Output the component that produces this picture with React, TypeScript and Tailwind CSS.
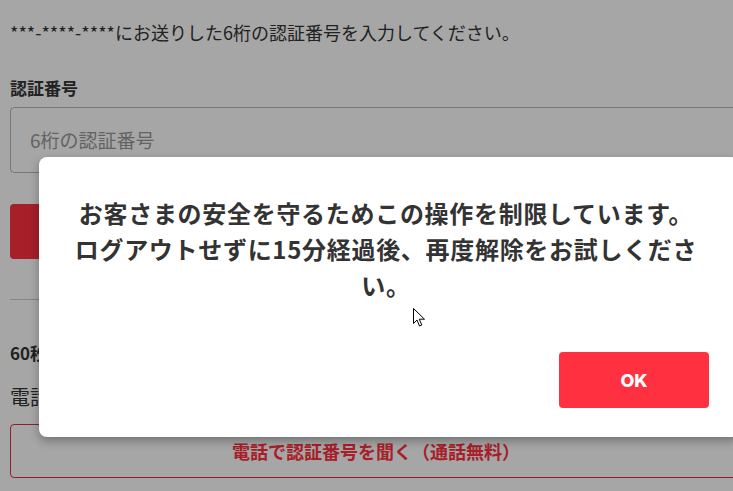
import React from 'react';

const jp = "font-['Noto_Sans_CJK_JP',sans-serif]";

export default function App() {
  return (
    <div className={`relative w-[733px] h-[491px] overflow-hidden bg-white text-[#333] ${jp}`}>
      {/* Page underneath */}
      <div className="w-[732px] ml-[10px]">
        <p className="pt-[20px] text-[18px] leading-[24px]">
          ***-****-****にお送りした6桁の認証番号を入力してください。
        </p>

        <div className="mt-[32px] text-[17px] font-bold leading-[24px]">認証番号</div>
        <div className="mt-[7px] h-[66px] rounded border border-[#bbb] flex items-center px-[19px] text-[19px] text-[#999]">
          6桁の認証番号
        </div>

        <button className="mt-[31px] w-full h-[55px] rounded bg-[#ff3040] text-white font-bold text-[18px]">
          認証する
        </button>

        <div className="mt-[40px] h-px bg-[#ccc]" />

        <div className="mt-[41px] text-[17px] font-bold leading-[24px]">60秒経っても認証番号が届かない場合</div>
        <div className="mt-[18px] text-[20px] leading-[28px]">電話で認証番号を受け取ることができます。</div>

        <button className="mt-[13px] w-full h-[54px] rounded border border-[#e0303c] text-[#ff3040] font-bold text-[18px]">
          電話で認証番号を聞く（通話無料）
        </button>
      </div>

      {/* Overlay */}
      <div className="absolute inset-0 bg-black/35" />

      {/* Dialog */}
      <div className="absolute left-[39px] top-[157px] w-[700px] h-[280px] rounded-lg bg-white shadow-[0_4px_10px_rgba(0,0,0,0.3)] pt-[38px] pr-[30px] pl-[24px] pb-[29px] flex flex-col">
        <p className="w-[634px] ml-[6px] text-center text-[24px] font-bold leading-[36px] tracking-[0.7px] text-[#333]">
          お客さまの安全を守るためこの操作を制限しています。ログアウトせずに15分経過後、再度解除をお試しください。
        </p>
        <div className="mt-auto flex justify-end">
          <button className="w-[150px] h-[56px] rounded bg-[#ff3040] text-white text-[18px] font-extrabold font-['Inter',sans-serif]">
            OK
          </button>
        </div>
      </div>

      {/* Mouse pointer */}
      <svg className="absolute left-[413px] top-[308px]" width="13" height="20" viewBox="0 0 13 20">
        <path d="M0.5 0.5 L0.5 15.5 L4 12 L6.5 18 L8.8 17 L6.3 11.2 L11.5 11.2 Z" fill="#fff" stroke="#000" strokeWidth="1" strokeLinejoin="miter" />
      </svg>
    </div>
  );
}
